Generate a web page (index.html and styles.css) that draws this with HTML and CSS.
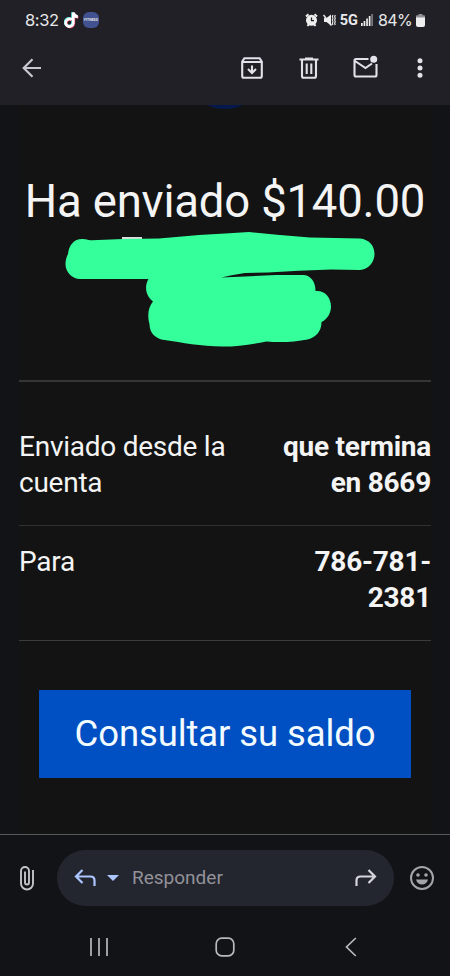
FILE: index.html
```html
<!DOCTYPE html>
<html lang="es">
<head>
  <meta charset="UTF-8" />
  <title>Ha enviado $140.00</title>
  <meta name="viewport" content="width=device-width, initial-scale=1" />
  <link rel="stylesheet" href="styles.css">
</head>
<body>
  <header class="top">
    <div class="status">
      <span class="clock">8:32</span>
      <svg class="tiktok" width="16" height="18" viewBox="0 0 16 18" fill="none" stroke-width="2.8">
        <path stroke="#35d5d5" d="M7.2 8.2A3.8 3.8 0 1 0 8.6 12V1.2c.4 2.5 2 4 4.6 4.3"/>
        <path stroke="#ee3f62" d="M8 8.8A3.8 3.8 0 1 0 9.8 12.6V2c.4 2.5 2 4 4.6 4.3"/>
        <path stroke="#fff" d="M7.5 8.5A3.8 3.8 0 1 0 9.2 12.3V1.5c.4 2.5 2 4 4.6 4.3"/>
      </svg>
      <span class="fitness">FITNESS</span>
      <div class="signals">
        <svg width="13" height="14" viewBox="0 0 13 14">
          <circle cx="6.5" cy="7.3" r="5.5" fill="#eee"/>
          <path d="M1 3.5L3.5 1.2M12 3.5L9.5 1.2M2.5 13l1.5-2M10.5 13L9 11" stroke="#eee" stroke-width="2"/>
          <path d="M6.5 4.5v3.2H9" fill="none" stroke="#202026" stroke-width="1.3"/>
        </svg>
        <svg class="mute" width="13" height="14" viewBox="0 0 13 14" fill="none" stroke="#eee">
          <path fill="#eee" stroke="none" d="M1 5h2.5L8 1.5v11L3.5 9H1z"/>
          <path stroke-width="1.5" d="M.5 2l8 10.5"/>
          <path stroke-width="1.1" d="M10 2l-.7 1.7.7 1.700-.7 1.700.7 1.700-.7 1.700.7 1.500M12.300 2l-.7 1.700.7 1.700-.7 1.700.7 1.700-.7 1.700.7 1.500"/>
        </svg>
        <span class="net">5G</span>
        <svg class="bars" width="12" height="12" viewBox="0 0 12 12" fill="#eee">
          <path d="M0 9h1.700v3H0zM2.600 7h1.700v5H2.600zM5.200 4.500h1.700V12H5.200zM7.800 2h1.700v10H7.800z"/>
          <path fill="#77777c" d="M10.200 0H12v12h-1.800z"/>
        </svg>
        <span class="percent">84%</span>
        <svg class="battery" width="9" height="13" viewBox="0 0 9 13" fill="#eee">
          <path fill="#909094" d="M2.500 0h4v1.200H8q1 0 1 1V4H0V2.200q0-1 1-1h1.500z"/>
          <path d="M0 3.500h9V11q0 2-2 2H2q-2 0-2-2z"/>
        </svg>
      </div>
    </div>
    <nav class="toolbar">
      <svg class="back" width="20" height="20" viewBox="0 0 20 20" fill="none" stroke="#c9c7d0" stroke-width="2.2">
        <path d="M19 10H2M10.500 1.200L1.700 10l8.800 8.800"/>
      </svg>
      <svg width="22" height="22" viewBox="0 0 22 22" fill="none" stroke="#e3e1e9" stroke-width="2.1">
        <path stroke-linejoin="round" d="M1.200 4.500L3.500 1.200h15l2.300 3.300v14.500q0 1.800-1.800 1.800H3q-1.800 0-1.800-1.800zM1.200 5h19.600"/>
        <path d="M11 8.500v7M7 12l4 4 4-4"/>
      </svg>
      <svg width="20" height="22" viewBox="0 0 20 22" fill="none" stroke="#e3e1e9" stroke-width="2.1">
        <path d="M.5 2.500h19M6 1.500h8M3 3v16q0 1.800 1.800 1.800h10.400q1.800 0 1.800-1.800V3M7.700 6.500v10.500M12.300 6.500v10.500"/>
      </svg>
      <svg class="unread" width="25" height="23" viewBox="0 0 25 23" fill="none" stroke="#e3e1e9" stroke-width="2.1">
        <path d="M15.500 4H3Q1.500 4 1.500 5.500V20q0 1.500 1.500 1.500h19q1.500 0 1.500-1.500V9M2 6l10.500 7L19 8.500"/>
        <circle cx="20.700" cy="4.200" r="3.500" fill="#e3e1e9" stroke="none"/>
      </svg>
      <svg class="more" width="6" height="20" viewBox="0 0 6 20" fill="#e3e1e9">
        <circle cx="3" cy="2.700" r="2.500"/><circle cx="3" cy="10" r="2.500"/><circle cx="3" cy="17.300" r="2.500"/>
      </svg>
    </nav>
  </header>

  <main class="mail">
    <div class="logo"></div>
    <h1>Ha enviado $140.00</h1>
    <svg class="scribble" width="320" height="124" viewBox="60 228 320 124">
      <path fill="#ddd" d="M122 237h20v3h-20z"/>
      <path fill="#34ff9b" d="M82 239c4 0 5 1 10 1.300L123 239l36-.5 40-3.500 26-1.500 24-1.500 28 2.800 33 2.700 50 1c9 1 14.500 7 14.500 15.500S368 269.500 360 270l-29-.5-32 1.200-31 1.800-23 .5c-8 1-16 2.500-24 4.500l24-1 31-1.500h27c7 0 12.500 6 12.500 16 9-1 15.500 6 15.500 15.500 0 7-4 13-9.500 15.500 0 9-5 15-14 17.500-12 2.500-28 3.200-41 2-16 3-28 5-44 5-22 0-40-4-58-6.500-9-1-15-7-15-16-2-7-2-16 3.500-22.500-8-6-8.500-16-4.500-22.500H80c-8 0-14.500-7-14.500-15 0-4 1-7 2.500-10 1-9 6-15 14-15z"/>
    </svg>
    <div class="details">
      <div class="row">
        <span>Enviado desde la cuenta</span>
        <strong>que termina en 8669</strong>
      </div>
      <div class="row">
        <span>Para</span>
        <strong>786-781-2381</strong>
      </div>
    </div>
    <a class="balance">Consultar su saldo</a>
  </main>

  <footer>
    <div class="reply">
      <svg class="clip" width="16" height="26" viewBox="0 0 16 26" fill="none" stroke="#c4c4c7" stroke-width="1.900">
        <path d="M14 6v12.500a6 6 0 0 1-12 0V6a4 4 0 0 1 8 0v11.500a2 2 0 0 1-4 0V6.500M14 5v2"/>
      </svg>
      <div class="field">
        <svg width="23" height="18" viewBox="0 0 23 18" fill="none" stroke="#adc6ff" stroke-width="2.200">
          <path d="M8.500 1L2 7.500 8.500 14M2 7.500h14.500q4 0 4 4V17"/>
        </svg>
        <svg class="caret" width="12" height="6" viewBox="0 0 12 6" fill="#adc6ff"><path d="M0 0h12L6 6z"/></svg>
        <span>Responder</span>
        <svg class="forward" width="23" height="18" viewBox="0 0 23 18" fill="none" stroke="#d5d5dc" stroke-width="2.200">
          <path d="M14.500 1L21 7.500 14.500 14M21 7.500H6.500q-4 0-4 4V17"/>
        </svg>
      </div>
      <svg class="smile" width="26" height="26" viewBox="0 0 26 26" fill="#a5a5a8">
        <circle cx="13" cy="13" r="11" fill="none" stroke="#a5a5a8" stroke-width="2"/>
        <circle cx="9" cy="10" r="1.800"/><circle cx="17" cy="10" r="1.800"/>
        <path d="M7 14.500h12q-1.500 5-6 5t-6-5z"/>
      </svg>
    </div>
    <div class="keys">
      <svg width="20" height="20" viewBox="0 0 20 20" stroke="#b9b9bb" stroke-width="1.700"><path d="M2 1v18M10 1v18M18 1v18"/></svg>
      <svg class="home" width="20" height="20" viewBox="0 0 20 20" fill="none" stroke="#b9b9bb" stroke-width="1.700"><rect x="1.200" y="1.200" width="17.600" height="17.600" rx="5.500"/></svg>
      <svg width="12" height="20" viewBox="0 0 12 20" fill="none" stroke="#b9b9bb" stroke-width="1.700"><path d="M10.800 1L1.500 10l9.300 9"/></svg>
    </div>
  </footer>
</body>
</html>
```

FILE: styles.css
```css
* { box-sizing: border-box; }
body {
  margin: 0; height: 976px; display: flex; flex-direction: column; overflow: hidden;
  background: #121317; color: #f4f4f4; font-family: Roboto, sans-serif;
}
svg { display: block; flex: none; }

.top { height: 105px; background: #202026; }
.status { height: 40px; padding: 0 25px; display: flex; align-items: center; color: #e8e8ea; }
.clock { width: 34px; font: 16.5px Inter, sans-serif; letter-spacing: -0.4px; }
.tiktok { margin-left: 5px; }
.fitness {
  width: 16px; height: 16px; margin-left: 3px; border-radius: 6px; background: #42518f;
  font-size: 3.5px; font-weight: bold; line-height: 16px; text-align: center;
}
.signals { margin-left: auto; display: flex; align-items: center; }
.mute { margin-left: 5px; }
.net { margin-left: 4px; font: bold 14.5px Roboto, sans-serif; }
.bars { margin-left: 3px; }
.percent { width: 35px; margin-left: 5px; font: 16px Inter, sans-serif; letter-spacing: -0.6px; white-space: nowrap; }
.battery { margin-left: 3px; }

.toolbar { height: 56px; padding: 0 27px 0 22px; display: flex; align-items: center; }
.back { margin-right: 199px; }
.toolbar svg + svg + svg { margin-left: 36px; }
.toolbar .unread { margin: -3px 0 0 34px; }
.toolbar .more { margin-left: 39px; }

.mail { position: relative; height: 729px; margin: 0 19px; background: #131313; overflow: hidden; }
.logo { width: 60px; height: 40px; margin: -36px auto 0; border-radius: 50%; background: #06194c; }
h1 {
  margin: 65px 0 0; font-size: 45.5px; font-weight: normal; line-height: 56px;
  letter-spacing: -0.2px; text-align: center; white-space: nowrap;
}
.scribble { position: absolute; left: 41px; top: 123px; }
.details { margin-top: 150px; border-top: 2px solid #353535; border-bottom: 1px solid #3c3c3c; padding-top: 30px; }
.row {
  display: flex; justify-content: space-between; padding: 17px 0 24px;
  font-size: 28px; line-height: 36px; letter-spacing: -0.25px;
}
.row + .row { border-top: 1px solid #303030; padding: 18px 0 24px; }
.row span { width: 220px; }
.row strong { width: 160px; text-align: right; }
.balance {
  display: block; height: 88px; margin: 49px 20px 0; background: #0050c3; color: #f3fbff;
  font-size: 36.5px; line-height: 87px; letter-spacing: -0.1px; text-align: center; white-space: nowrap;
}

footer { flex: 1; border-top: 1px solid #57585b; }
.reply { height: 86px; padding: 0 15px 0 19px; display: flex; align-items: center; }
.field {
  width: 337px; height: 56px; margin-left: 22px; padding: 0 17px; border-radius: 28px;
  background: #23252f; display: flex; align-items: center; color: #929298;
}
.caret { margin-left: 10px; }
.field span { margin: -1px 0 0 13px; font-size: 19px; }
.forward { margin-left: auto; }
.smile { margin-left: auto; }
.keys { height: 52px; padding: 0 93px 0 89px; display: flex; align-items: center; justify-content: space-between; }
.home { margin-right: 5px; }
```
